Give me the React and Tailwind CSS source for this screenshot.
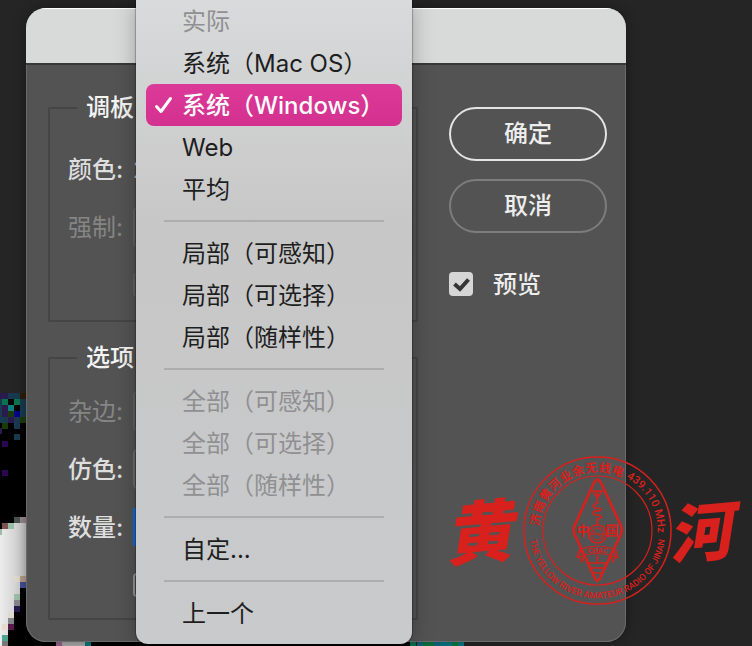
import React from "react";

const tiles = [
  [0, 393, "#2b1a4d"], [2, 393, "#2b1a4d"], [8, 393, "#173a4f"], [14, 393, "#173a4f"], [20, 393, "#2e1c05"],
  [0, 399, "#173a4f"], [2, 399, "#08734f"], [8, 399, "#000000"], [14, 399, "#08734f"], [20, 399, "#173a4f"],
  [0, 405, "#173a4f"], [2, 405, "#2b1a4d"], [8, 405, "#0a7f7b"], [14, 405, "#000000"], [20, 405, "#173a4f"],
  [0, 411, "#173a4f"], [2, 411, "#2b1a4d"], [8, 411, "#1c3a05"], [14, 411, "#05058a"], [20, 411, "#173a4f"],
  [0, 417, "#173a4f"], [2, 417, "#173a4f"], [8, 417, "#2b1a4d"], [14, 417, "#173a4f"], [20, 417, "#1c3a05"],
  [2, 423, "#1c3a05"], [14, 423, "#173a4f"], [-4, 428, "#2b1a4d"], [14, 434, "#173a4f"],
  [2, 441, "#2a0550"], [2, 470, "#2a0550"],
  [14, 517, "#4a544e"], [20, 517, "#97868f"], [2, 523, "#7d544e"], [8, 523, "#99bda6"], [-4, 529, "#99bda6"],
  [14, 576, "#e0d8cc"], [20, 576, "#b79c89"], [20, 582, "#414e94"], [14, 594, "#99bda6"], [14, 600, "#85868a"],
  [14, 606, "#24174f"], [8, 612, "#dedace"], [8, 618, "#85868a"], [8, 624, "#591b4d"], [2, 624, "#e6dccd"],
  [2, 635, "#4fa392"], [2, 641, "#777777"],
  [56, 640, "#97618a"], [62, 640, "#a9a9a9"], [68, 640, "#a9a9a9"], [74, 640, "#a9a9a9"], [79, 640, "#a9a9a9"],
  [85, 640, "#08777b"], [410, 640, "#0a7a5c"], [417, 640, "#126a85"], [423, 640, "#0a7a45"], [428, 640, "#0a7a45"],
  [434, 640, "#126a85"], [440, 640, "#087a85"], [446, 640, "#087a85"], [452, 640, "#0a7a45"], [458, 640, "#087a85"],
];

function Canvas() {
  return (
    <svg className="absolute left-0 top-0" width="752" height="646" aria-hidden="true" shapeRendering="crispEdges">
      <defs>
        <linearGradient id="paper" x1="0" x2="1" y1="0" y2="0">
          <stop offset="0" stopColor="#ececec" />
          <stop offset="1" stopColor="#c4c4c4" />
        </linearGradient>
      </defs>
      <rect x="0" y="393" width="26" height="253" fill="#000" />
      <rect x="26" y="610" width="384" height="36" fill="#000" />
      <path
        d="M0 535V529H2V529H14V523H26V576H20V594H14V612H8V635H2V646H0Z"
        fill="url(#paper)"
      />
      {tiles.map(([x, y, fill]) => (
        <rect key={`${x}-${y}`} x={x} y={y} width="6" height="6" fill={fill} />
      ))}
    </svg>
  );
}

const choices = [
  [
    { text: "实际", off: true },
    { text: "系统（Mac OS）" },
    { text: "系统（Windows）", on: true },
    { text: "Web" },
    { text: "平均" },
  ],
  [{ text: "局部（可感知）" }, { text: "局部（可选择）" }, { text: "局部（随样性）" }],
  [
    { text: "全部（可感知）", off: true },
    { text: "全部（可选择）", off: true },
    { text: "全部（随样性）", off: true },
  ],
  [{ text: "自定..." }],
  [{ text: "上一个" }],
];

function PaletteMenu() {
  return (
    <div
      role="menu"
      aria-label="调板"
      className="absolute left-[136px] top-0 z-10 w-[276px] rounded-b-xl bg-linear-to-b from-[#d9dadb] via-[#c7c7c7] via-35% to-[#c9cacc] px-[10px] pb-[10px] shadow-[0_0_1px_1px_rgba(0,0,0,0.25),0_4px_22px_rgba(0,0,0,0.28)]"
    >
      {choices.map((group, i) => (
        <div key={group[0].text} role="group">
          {i > 0 && (
            <div className="flex h-[22px] items-center px-[18px]">
              <hr className="w-full border-t-2 border-[#adadae]" />
            </div>
          )}
          {group.map((item) => (
            <button
              key={item.text}
              type="button"
              role="menuitemradio"
              aria-checked={Boolean(item.on)}
              disabled={item.off}
              className={
                item.on
                  ? "flex h-[42px] w-full items-center rounded-lg bg-linear-to-b from-[#dc3a98] to-[#d3308f] pt-0.5 text-left font-medium text-white"
                  : "flex h-[42px] w-full items-center rounded-lg pt-0.5 text-left text-[#1e1e1e] disabled:text-[#909092]"
              }
            >
              <span className="flex w-9 shrink-0 items-center pl-2">
                {item.on && (
                  <svg width="20" height="20" viewBox="0 0 20 20" fill="none" stroke="#fff" strokeWidth="3" strokeLinecap="round" strokeLinejoin="round" aria-hidden="true">
                    <path d="M2.500 10.500L7 15.500L16.500 2.500" />
                  </svg>
                )}
              </span>
              <span className="whitespace-nowrap">{item.text}</span>
            </button>
          ))}
        </div>
      ))}
    </div>
  );
}

function Row({ id, label, off, children }) {
  return (
    <div className="flex h-[42px] items-center">
      <label
        htmlFor={id}
        className={off ? "w-[65px] shrink-0 whitespace-nowrap pt-0.5 text-[#858585]" : "w-[65px] shrink-0 whitespace-nowrap pt-0.5 font-medium text-[#dedede]"}
      >
        {label}
      </label>
      {children}
    </div>
  );
}

function Stamp() {
  return (
    <svg
      className="pointer-events-none absolute left-[440px] top-[445px] z-20"
      width="304"
      height="170"
      viewBox="440 445 304 170"
      fill="none"
      stroke="#d8201c"
      role="img"
      aria-label="黄河 439.110 MHz"
    >
      <defs>
        <path id="arc-freq" d="M597.5 470.500A60 60 0 0 1 657.5 530.500V540" />
        <path id="arc-bottom" d="M529.5 530.500A68 68 0 0 0 665.500 530.500" />
      </defs>
      <circle cx="597.5" cy="530.5" r="73.5" strokeWidth="1.5" />
      <circle cx="597.5" cy="530.5" r="54.5" strokeWidth="1.2" />
      <g fill="#d8201c" stroke="none">
        <g fontSize="12" fontWeight="700" textAnchor="middle" className="font-['Noto_Sans_CJK_SC',sans-serif]">
          {["济", "南", "黄", "河", "业", "余", "无", "线", "电"].map((c, i) => (
            <text key={c} x="597.5" y="472" transform={`rotate(${-80 + i * 12.4} 597.5 530.5)`}>{c}</text>
          ))}
        </g>
        <text fontSize="11" fontWeight="500" className="font-['Roboto',sans-serif]">
          <textPath href="#arc-freq" startOffset="30">439.110 MHz</textPath>
        </text>
        <text fontSize="9" fontWeight="500" textAnchor="middle" className="font-['Roboto',sans-serif]">
          <textPath href="#arc-bottom" startOffset="50%">THE YELLOW RIVER AMATEUR RADIO OF JINAN</textPath>
        </text>
        <g fontSize="13" fontWeight="700" textAnchor="middle" className="font-['Noto_Sans_CJK_SC',sans-serif]">
          <text x="583" y="535">中</text>
          <text x="612" y="535">国</text>
        </g>
        <g fontWeight="900" fontStyle="italic" textAnchor="middle" className="font-['Noto_Sans_CJK_SC',sans-serif]">
          <text x="478" y="558" fontSize="68" transform="rotate(-5 478 532)">黄</text>
          <text x="700" y="556" fontSize="64" transform="rotate(-5 700 532)">河</text>
        </g>
      </g>
      <path d="M597.5 479.5Q600 479.5 603 487L621 526Q622.500 530 621 534L602 574Q599 581 597.500 581Q596 581 593 574L574.500 534Q573 530 574.500 526L592 487Q595 479.500 597.500 479.500Z" strokeWidth="2.6" />
      <path d="M593 491H602L597.500 498ZM597.500 491V503C592 505 592 508 597 508C602 508 602 511 597 511C592 511 591 515 597 515C603 515 602 518 597.500 519V525" strokeWidth="1.6" />
      <circle cx="597.500" cy="534" r="9" strokeWidth="1.500" />
      <circle cx="597.500" cy="534" r="6" strokeWidth="1" />
      <path d="M589 534H606M592 530L603 538" strokeWidth="1" />
      <path d="M581 549Q597.500 543 614 549L616 557Q597.500 550 579 557ZM579 550L577 557L580 558L582 562L584 556M616 550L618 557L615 558L613 562L611 556" strokeWidth="1.200" />
      <text x="597.500" y="553" fontSize="7" fontWeight="700" textAnchor="middle" fill="#d8201c" stroke="none" className="font-['Liberation_Sans',sans-serif]">CRAC</text>
      <path d="M597.500 555V563M588 563H607M590.500 568H604.500M594 573H601" strokeWidth="1.600" />
    </svg>
  );
}

export default function App() {
  const field = "h-[42px] w-full appearance-none rounded-md border-2 bg-transparent";
  return (
    <div className="relative min-h-screen overflow-hidden bg-[#252525] pb-1 pl-[26px] pr-[126px] pt-2 font-['Inter','Noto_Sans_CJK_SC',sans-serif] text-2xl">
      <Canvas />
      <form
        onSubmit={(e) => e.preventDefault()}
        className="relative overflow-hidden rounded-[20px] bg-[#535353] shadow-[inset_0_0_0_1px_#6a6a6a,0_0_12px_rgba(0,0,0,0.35)]"
      >
        <header className="h-[57px] border-b-2 border-[#383838] bg-[#d8dad9] shadow-[inset_0_1px_0_#ffffff]" />
        <div className="flex gap-[31px] pb-[22px] pl-[22px] pr-[19px]">
          <div className="flex min-w-0 flex-1 flex-col gap-[18px] pt-[25px]">
            <fieldset className="flex min-w-0 flex-col gap-4 rounded-xs border-2 border-[#454545] px-[18px] pb-[14px] pt-[22px]">
              <legend className="ml-[9px] h-9 px-[9px] font-medium leading-9 text-[#f4f4f4]">调板</legend>
              <Row id="colors" label="颜色:">
                <input id="colors" defaultValue="256" className="h-[42px] w-full bg-transparent text-[#dedede] outline-none" />
              </Row>
              <Row id="forced" label="强制:" off>
                <select id="forced" disabled className={`${field} border-[#606060] opacity-100`} />
              </Row>
              <div className="flex h-[42px] items-center pl-[65px]">
                <input type="checkbox" disabled aria-label="透明度" className="size-6 appearance-none rounded border-2 border-[#606060]" />
              </div>
            </fieldset>
            <fieldset className="flex min-w-0 flex-col gap-4 rounded-xs border-2 border-[#454545] px-[18px] pb-3 pt-[14px]">
              <legend className="ml-[9px] h-9 px-[9px] font-medium leading-9 text-[#f4f4f4]">选项</legend>
              <Row id="matte" label="杂边:" off>
                <select id="matte" disabled className={`${field} border-[#606060] opacity-100`} />
              </Row>
              <Row id="dither" label="仿色:">
                <select id="dither" className={`${field} border-[#6c6c6c]`} />
              </Row>
              <Row id="amount" label="数量:">
                <input id="amount" className="h-[38px] w-full border-2 border-[#1767d2] bg-[#1767d2] outline-none" />
              </Row>
              <div className="flex h-[42px] items-center pl-[65px]">
                <input type="checkbox" aria-label="保留实际颜色" className="size-6 appearance-none rounded border-2 border-[#959595]" />
              </div>
            </fieldset>
          </div>
          <div className="flex w-[158px] shrink-0 flex-col gap-[18px] pt-[42px] font-medium text-[#ededed]">
            <button type="submit" className="h-[54px] rounded-full border-2 border-[#e4e4e4]">确定</button>
            <button type="button" className="h-[54px] rounded-full border-2 border-[#7d7d7d]">取消</button>
            <label className="mt-[15px] flex h-9 items-center gap-5">
              <span className="grid size-6 shrink-0">
                <input type="checkbox" defaultChecked className="col-start-1 row-start-1 size-6 appearance-none rounded bg-[#d6d6d6]" />
                <svg className="pointer-events-none col-start-1 row-start-1" width="24" height="24" viewBox="0 0 24 24" fill="none" stroke="#353535" strokeWidth="4" aria-hidden="true">
                  <path d="M5.500 12L11 17L19.500 7.500" />
                </svg>
              </span>
              <span className="pt-0.5">预览</span>
            </label>
          </div>
        </div>
      </form>
      <PaletteMenu />
      <Stamp />
    </div>
  );
}
